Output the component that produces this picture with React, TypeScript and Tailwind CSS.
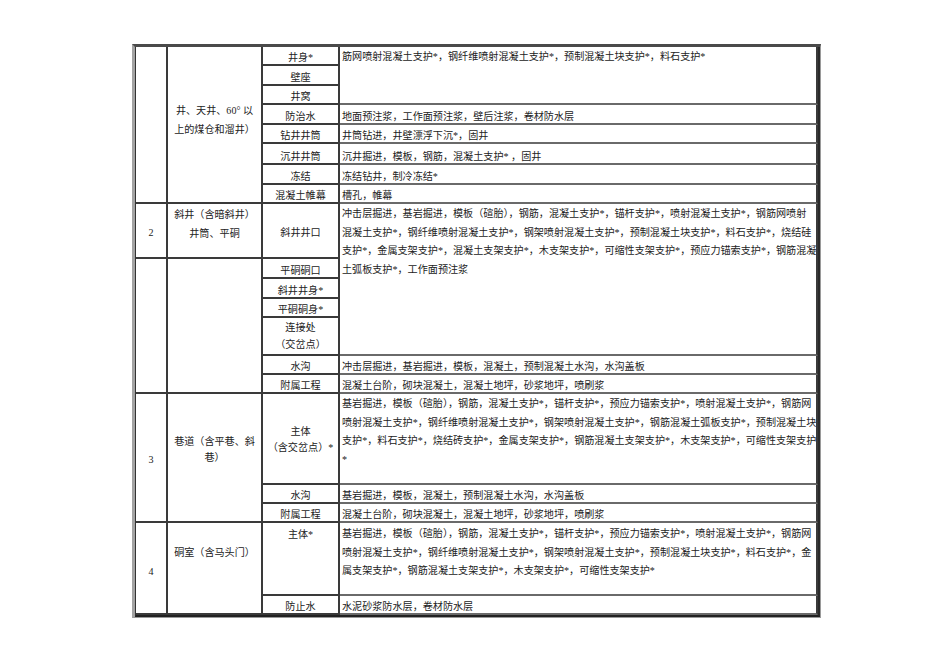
import type { ReactNode } from 'react'

type CellProps = {
  pos: string
  className?: string
  children?: ReactNode
}

function Cell({ pos, className = '', children }: CellProps) {
  return (
    <div className={`overflow-hidden whitespace-nowrap border-b-2 border-r-2 border-[#3a3a3a] ${pos} ${className}`}>
      {children}
    </div>
  )
}

function Lines({ lines }: { lines: string[] }) {
  return (
    <>
      {lines.map((l, i) => (
        <div key={i}>{l}</div>
      ))}
    </>
  )
}

// single line cells sit low in the row, like the source sheet
const single = 'flex items-end justify-center leading-[12px]'

const items = [
  { pos: 'col-start-3 row-start-1', cls: single, text: ['井身*'] },
  { pos: 'col-start-3 row-start-2', cls: single, text: ['壁座'] },
  { pos: 'col-start-3 row-start-3', cls: single, text: ['井窝'] },
  { pos: 'col-start-3 row-start-4', cls: single, text: ['防治水'] },
  { pos: 'col-start-3 row-start-5', cls: single, text: ['钻井井筒'] },
  { pos: 'col-start-3 row-start-6', cls: single, text: ['沉井井筒'] },
  { pos: 'col-start-3 row-start-7', cls: single, text: ['冻结'] },
  { pos: 'col-start-3 row-start-8', cls: single, text: ['混凝土帷幕'] },
  { pos: 'col-start-3 row-start-9', cls: 'text-center leading-[18px] pt-[20px]', text: ['斜井井口'] },
  { pos: 'col-start-3 row-start-10', cls: single, text: ['平硐硐口'] },
  { pos: 'col-start-3 row-start-11', cls: single, text: ['斜井井身*'] },
  { pos: 'col-start-3 row-start-12', cls: single, text: ['平硐硐身*'] },
  { pos: 'col-start-3 row-start-13', cls: 'text-center leading-[17px] pt-[1px]', text: ['连接处', '（交岔点）'] },
  { pos: 'col-start-3 row-start-14', cls: single, text: ['水沟'] },
  { pos: 'col-start-3 row-start-15', cls: single, text: ['附属工程'] },
  { pos: 'col-start-3 row-start-16', cls: 'text-center leading-[16px] pt-[30px]', text: ['主体', '（含交岔点）*'] },
  { pos: 'col-start-3 row-start-17', cls: single, text: ['水沟'] },
  { pos: 'col-start-3 row-start-18', cls: single, text: ['附属工程'] },
  { pos: 'col-start-3 row-start-19', cls: 'text-center leading-[16px] pt-[4px]', text: ['主体*'] },
  { pos: 'col-start-3 row-start-20 border-b-0', cls: single, text: ['防止水'] },
]

const desc = 'border-r-0 border-b-[#6a6a6a] pl-[2px]'
const descSingle = 'flex items-end leading-[12px]'
const descMulti = 'leading-[18.7px] pt-[1px]'

const details = [
  {
    pos: 'col-start-4 row-start-1 row-span-3',
    cls: descMulti,
    text: ['筋网喷射混凝土支护*，钢纤维喷射混凝土支护*，预制混凝土块支护*，料石支护*'],
  },
  { pos: 'col-start-4 row-start-4', cls: descSingle, text: ['地面预注浆，工作面预注浆，壁后注浆，卷材防水层'] },
  { pos: 'col-start-4 row-start-5', cls: descSingle, text: ['井筒钻进，井壁漂浮下沉*，固井'] },
  { pos: 'col-start-4 row-start-6', cls: descSingle, text: ['沉井掘进，模板，钢筋，混凝土支护* ，固井'] },
  { pos: 'col-start-4 row-start-7', cls: descSingle, text: ['冻结钻井，制冷冻结*'] },
  { pos: 'col-start-4 row-start-8', cls: descSingle, text: ['槽孔，帷幕'] },
  {
    pos: 'col-start-4 row-start-9 row-span-5',
    cls: descMulti,
    text: [
      '冲击层掘进，基岩掘进，模板（碹胎），钢筋，混凝土支护*，锚杆支护*，喷射混凝土支护*，钢筋网喷射',
      '混凝土支护*，钢纤维喷射混凝土支护*，钢架喷射混凝土支护*，预制混凝土块支护*，料石支护*，烧结硅',
      '支护*，金属支架支护*，混凝土支架支护*，木支架支护*，可缩性支架支护*，预应力锚索支护*，钢筋混凝',
      '土弧板支护*，工作面预注浆',
    ],
  },
  { pos: 'col-start-4 row-start-14', cls: descSingle, text: ['冲击层掘进，基岩掘进，模板，混凝土，预制混凝土水沟，水沟盖板'] },
  { pos: 'col-start-4 row-start-15', cls: descSingle, text: ['混凝土台阶，砌块混凝土，混凝土地坪，砂浆地坪，喷刷浆'] },
  {
    pos: 'col-start-4 row-start-16',
    cls: descMulti,
    text: [
      '基岩掘进，模板（碹胎），钢筋，混凝土支护*，锚杆支护*，预应力锚索支护*，喷射混凝土支护*，钢筋网',
      '喷射混凝土支护*，钢纤维喷射混凝土支护*，钢架喷射混凝土支护*，钢筋混凝土弧板支护*，预制混凝土块',
      '支护*，料石支护*，烧结砖支护*，金属支架支护*，钢筋混凝土支架支护*，木支架支护*，可缩性支架支护',
      '*',
    ],
  },
  { pos: 'col-start-4 row-start-17', cls: descSingle, text: ['基岩掘进，模板，混凝土，预制混凝土水沟，水沟盖板'] },
  { pos: 'col-start-4 row-start-18', cls: descSingle, text: ['混凝土台阶，砌块混凝土，混凝土地坪，砂浆地坪，喷刷浆'] },
  {
    pos: 'col-start-4 row-start-19',
    cls: 'leading-[18.7px] pt-[2px]',
    text: [
      '基岩掘进，模板（碹胎），钢筋，混凝土支护*，锚杆支护*，预应力锚索支护*，喷射混凝土支护*，钢筋网',
      '喷射混凝土支护*，钢纤维喷射混凝土支护*，钢架喷射混凝土支护*，预制混凝土块支护*，料石支护*，金',
      '属支架支护*，钢筋混凝土支架支护*，木支架支护*，可缩性支架支护*',
    ],
  },
  { pos: 'col-start-4 row-start-20 border-b-0', cls: descSingle, text: ['水泥砂浆防水层，卷材防水层'] },
]

export default function App() {
  return (
    <div className="min-h-[672px] w-[950px] bg-white pt-[44px] pl-[132px] font-['Liberation_Serif','Noto_Sans_CJK_SC',serif] text-[10.1px] text-[#222]">
      <div className="w-[689px] border-t-[3px] border-l-[3px] border-r border-b border-t-[#4a4a4a] border-l-[#a3a3a3] border-r-[#9a9a9a] border-b-[#9a9a9a]">
        <div className="grid grid-cols-[32px_95px_77px_478px] grid-rows-[19px_20px_19px_20px_19px_21px_20px_19px_55px_20px_20px_19px_38px_19px_19px_91px_19px_19px_73px_19px] border-l border-r-2 border-b-2 border-l-[#333] border-r-[#2a2a2a] border-b-[#222]">
          {/* 序号 */}
          <Cell pos="col-start-1 row-start-1 row-span-8" />
          <Cell pos="col-start-1 row-start-9" className="pt-[20px] text-center leading-[18px]">2</Cell>
          <Cell pos="col-start-1 row-start-10 row-span-6" />
          <Cell pos="col-start-1 row-start-16 row-span-3" className="pt-[58px] text-center leading-[16px]">3</Cell>
          <Cell pos="col-start-1 row-start-19 row-span-2 border-b-0" className="pt-[41px] text-center leading-[16px]">4</Cell>

          {/* 工程类别 */}
          <Cell pos="col-start-2 row-start-1 row-span-8" className="pt-[54px] text-center leading-[19px]">
            <Lines lines={['井、天井、60° 以', '上的煤仓和溜井）']} />
          </Cell>
          <Cell pos="col-start-2 row-start-9" className="pt-[2px] text-center leading-[18.5px]">
            <Lines lines={['斜井（含暗斜井）', '井筒、平硐']} />
          </Cell>
          <Cell pos="col-start-2 row-start-10 row-span-6" />
          <Cell pos="col-start-2 row-start-16 row-span-3" className="pt-[40px] text-center leading-[16px]">
            <Lines lines={['巷道（含平巷、斜', '巷）']} />
          </Cell>
          <Cell pos="col-start-2 row-start-19 row-span-2 border-b-0" className="pt-[22px] text-center leading-[16px]">
            硐室（含马头门）
          </Cell>

          {/* 分项工程 */}
          {items.map((it, i) => (
            <Cell key={`p${i}`} pos={it.pos} className={it.cls}>
              <Lines lines={it.text} />
            </Cell>
          ))}

          {/* 工程内容 */}
          {details.map((d, i) => (
            <Cell key={`d${i}`} pos={`${d.pos} ${desc}`} className={d.cls}>
              {d.text.length > 1 ? <Lines lines={d.text} /> : <span>{d.text[0]}</span>}
            </Cell>
          ))}
        </div>
      </div>
    </div>
  )
}
